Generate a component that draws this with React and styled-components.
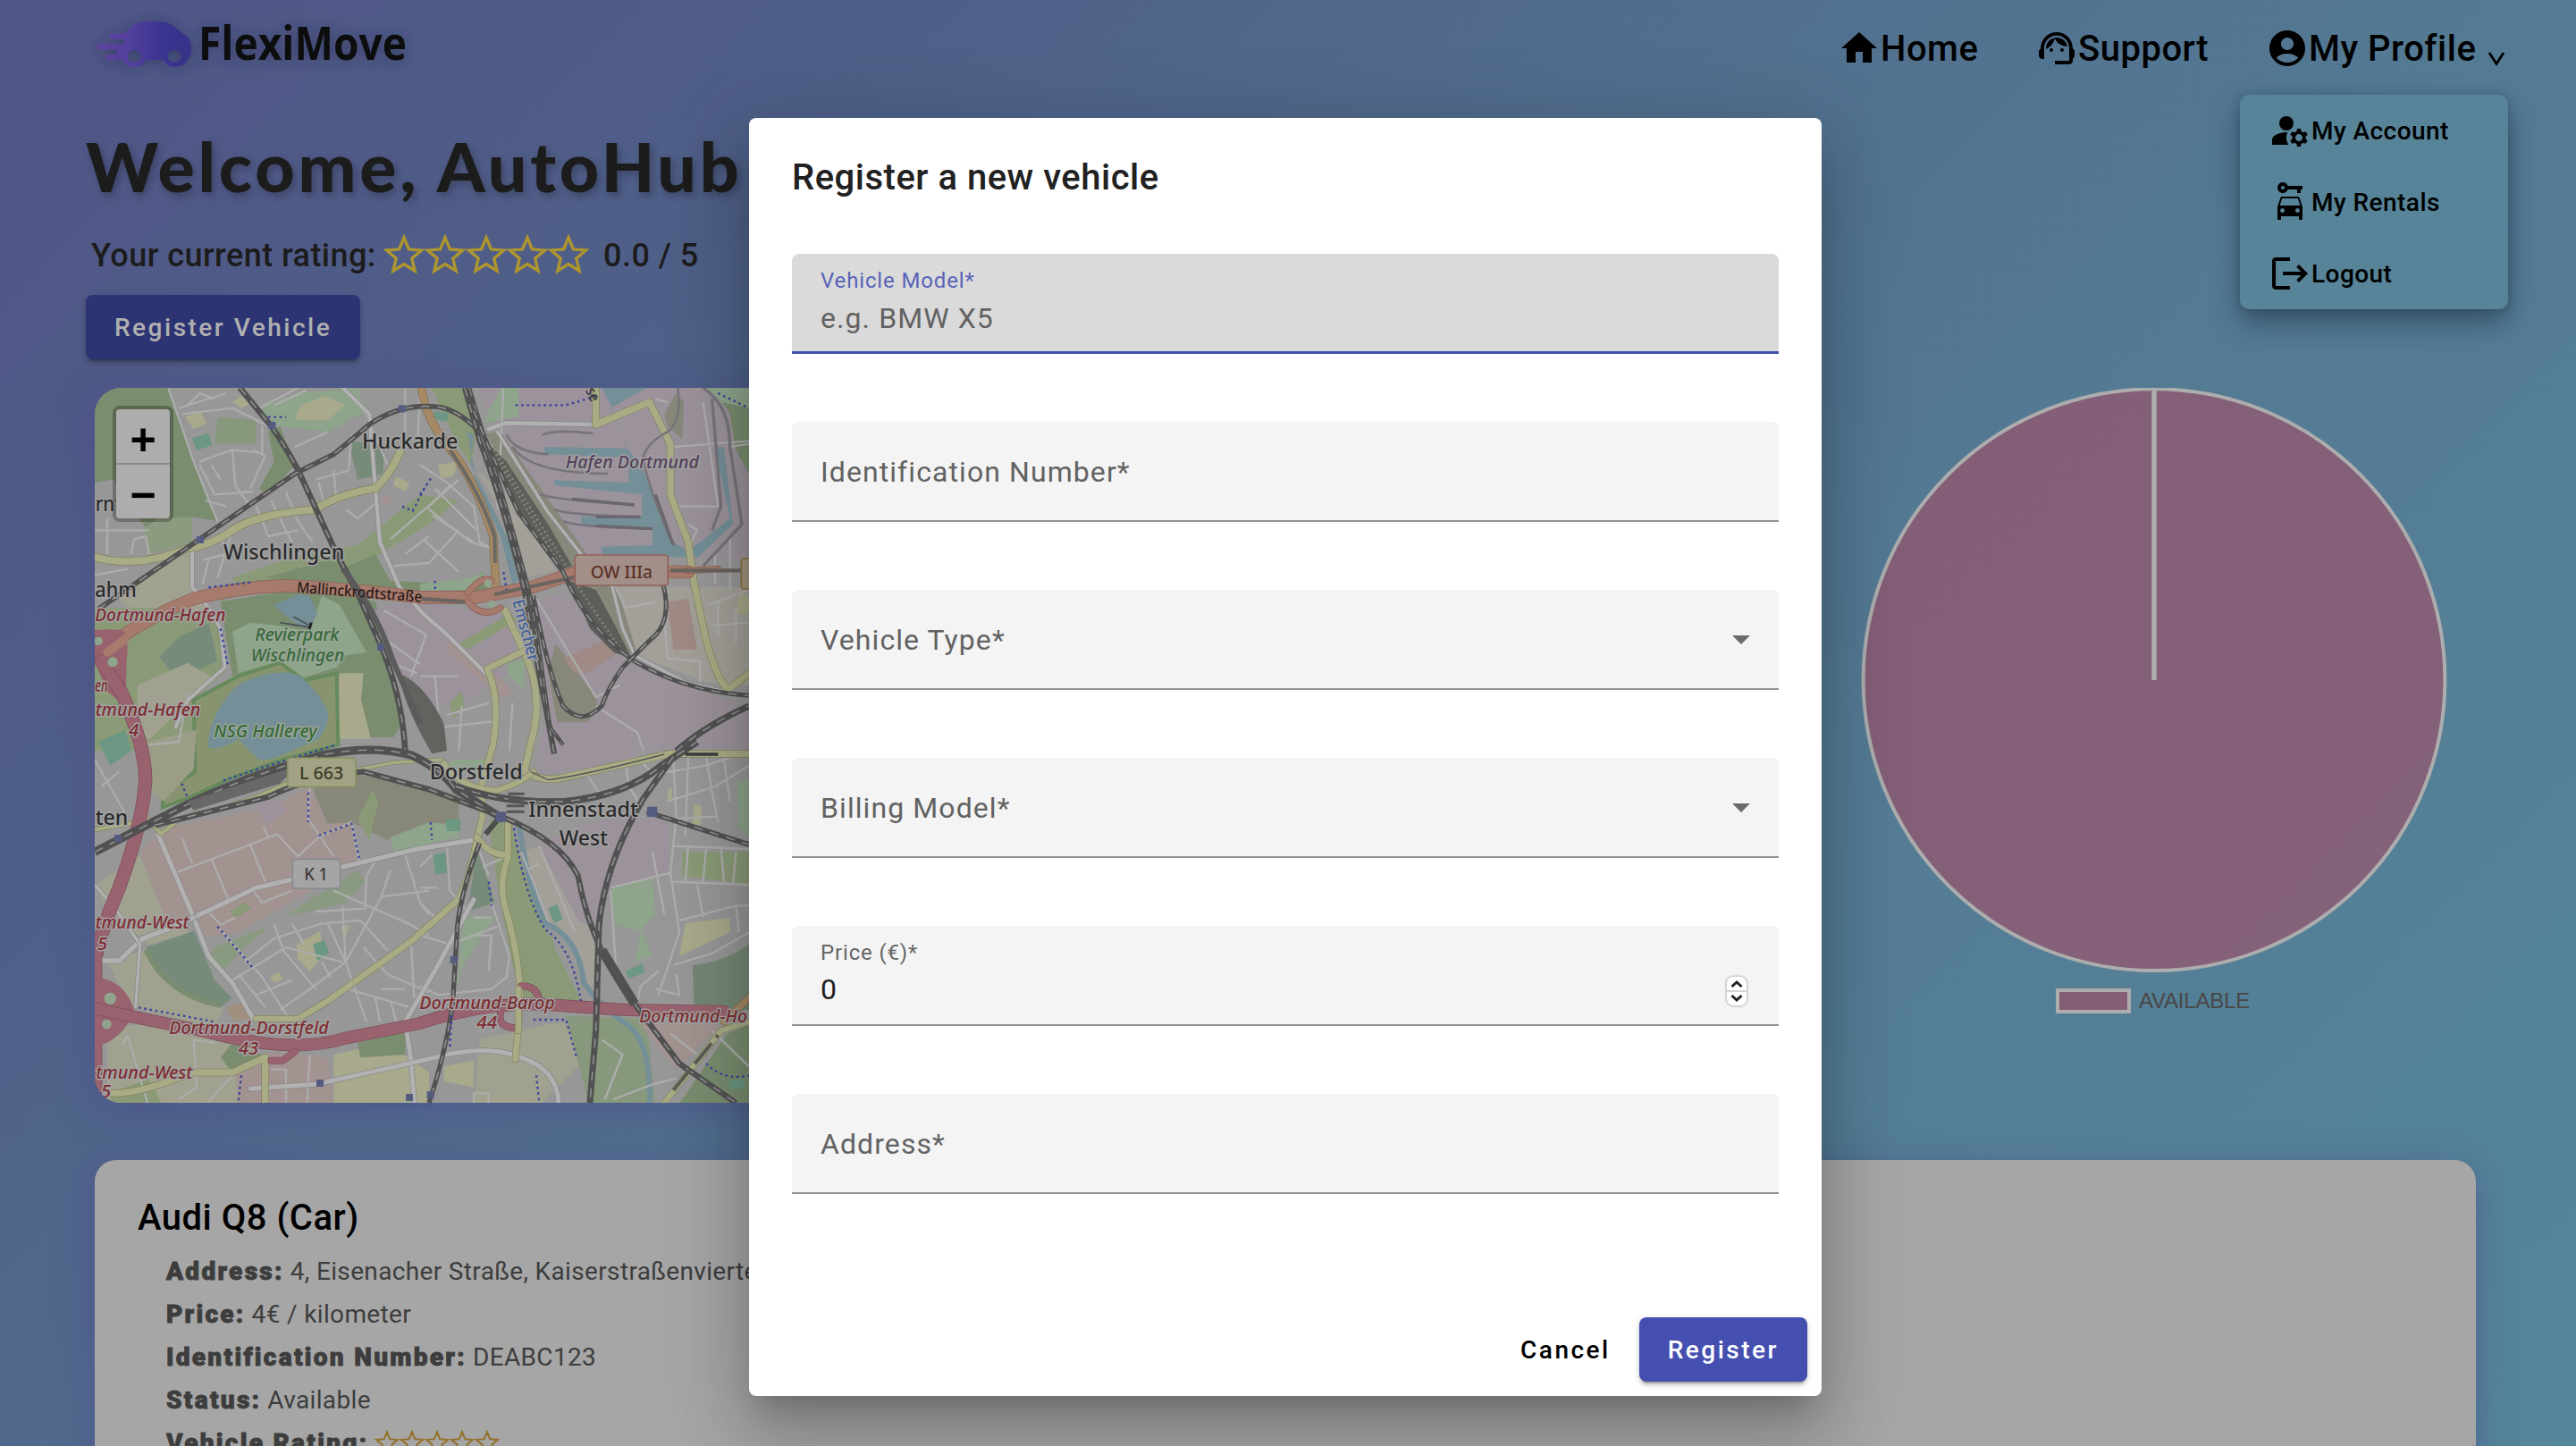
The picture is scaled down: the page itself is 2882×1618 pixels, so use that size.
import React from "react";
import styled, { createGlobalStyle } from "styled-components";
import { MdHome, MdSupportAgent, MdAccountCircle, MdManageAccounts, MdCarRental } from "react-icons/md";

const GlobalStyle = createGlobalStyle`
  * { box-sizing: border-box; }
  html, body { margin: 0; padding: 0; }
  body { font-family: Roboto, "Noto Sans", sans-serif; overflow: hidden; }
  h1, h2, h3, p, ul { margin: 0; padding: 0; }
`;

const Page = styled.div`
  position: relative;
  width: 2882px;
  height: 1618px;
  overflow: hidden;
  padding-right: 6px;
  background: linear-gradient(135deg, #505486 0%, #4f6088 23.5%, #52708f 46%, #547b94 64%, #54869a 100%);
`;

const Header = styled.header`
  display: flex;
  align-items: flex-start;
  height: 108px;
  padding: 0 70px 0 104px;
`;

const LogoSvg = styled.svg`
  display: block;
  width: 370px;
  height: 100px;
  overflow: visible;
`;

const Nav = styled.nav`
  display: flex;
  margin-left: auto;
  padding-top: 30px;
`;

const NavItem = styled.div`
  position: relative;
  display: flex;
  align-items: center;
  width: ${(p) => p.$width}px;
  height: 48px;
  font-size: 40px;
  font-weight: 500;
  line-height: 48px;
  letter-spacing: 0.5px;
  white-space: nowrap;
  color: #000;
  svg { flex: none; }
`;

const NavText = styled.span`
  padding-top: 2px;
`;

const Chevron = styled.svg`
  width: 20px;
  height: 16px;
  margin-left: auto;
  margin-right: 3px;
  margin-top: 24px;
`;

const Dropdown = styled.div`
  position: absolute;
  top: 76px;
  right: 0;
  width: 300px;
  height: 240px;
  border-radius: 10px;
  background: #578498;
  box-shadow: 0 16px 32px rgba(20, 30, 50, 0.42), 0 2px 12px rgba(20, 30, 50, 0.25);
`;

const DropdownItem = styled.div`
  display: flex;
  align-items: center;
  height: 80px;
  padding-left: 32px;
  font-size: 28px;
  letter-spacing: 0.45px;
`;

const Intro = styled.section`
  padding: 32px 0 0 96px;
`;

const Heading = styled.h1`
  font-family: Lato, "Open Sans", sans-serif;
  font-size: 77px;
  font-weight: 900;
  line-height: 90px;
  letter-spacing: 3.8px;
  color: #1c1c1c;
  white-space: nowrap;
  text-shadow: 3px 4px 8px rgba(0, 0, 0, 0.25);
`;

const RatingRow = styled.div`
  display: flex;
  align-items: center;
  height: 60px;
  margin: 26px 0 14px;
  padding-left: 6px;
  font-size: 36px;
  font-weight: 500;
  color: #1c1c1c;
  white-space: nowrap;
`;

const RatingLabel = styled.span`
  width: 327px;
  letter-spacing: 0.45px;
`;

const RatingValue = styled.span`
  margin-left: 16px;
  letter-spacing: 0.5px;
`;

const Stars = styled.svg`
  display: block;
  flex: none;
  width: ${(p) => p.$pitch * 5}px;
  height: ${(p) => p.$pitch}px;
  margin-bottom: 3px;
`;

const Button = styled.button`
  display: block;
  height: 72px;
  padding: 2px 32px 0;
  border: 0;
  border-radius: 8px;
  font: 500 28px/70px Roboto, sans-serif;
  letter-spacing: 2.5px;
  white-space: nowrap;
  color: ${(p) => (p.$dim ? "#b0b0b0" : p.$plain ? "#000" : "#fff")};
  background: ${(p) => (p.$dim ? "#2c3474" : p.$plain ? "transparent" : "#444fb0")};
  box-shadow: ${(p) =>
    p.$plain ? "none" : "0 6px 2px -4px rgba(0,0,0,.2), 0 4px 4px rgba(0,0,0,.14), 0 2px 10px rgba(0,0,0,.12)"};
`;

const Overview = styled.section`
  display: flex;
  justify-content: space-between;
  height: 800px;
  margin-top: 32px;
  padding: 0 106px;
`;

const MapPanel = styled.div`
  position: relative;
  width: 1400px;
  height: 800px;
  border-radius: 30px;
  overflow: hidden;
  background: #979797;
`;

const MapFrame = styled.div`
  border-radius: 30px;
  box-shadow: 0 8px 40px rgba(76, 70, 140, 0.5);
`;

const MapSvg = styled.svg`
  display: block;
  width: 740px;
  height: 800px;
`;

const ZoomControl = styled.div`
  position: absolute;
  left: 20px;
  top: 20px;
  width: 68px;
  border: 4px solid rgba(0, 0, 0, 0.26);
  border-radius: 8px;
  background-clip: padding-box;
`;

const ZoomButton = styled.div`
  display: flex;
  align-items: center;
  justify-content: center;
  height: ${(p) => (p.$first ? 62 : 60)}px;
  padding-top: 7px;
  border-bottom: ${(p) => (p.$first ? "2px solid #8b8b8b" : "0")};
  border-radius: ${(p) => (p.$first ? "4px 4px 0 0" : "0 0 4px 4px")};
  background: #adadad;
  color: #000;
  font: bold 50px/52px "Liberation Sans", sans-serif;
`;

const ChartPanel = styled.div`
  width: 720px;
`;

const ChartSvg = styled.svg`
  display: block;
  width: 720px;
  height: 656px;
`;

const Legend = styled.div`
  display: flex;
  align-items: center;
  justify-content: center;
  gap: 9px;
  height: 28px;
  margin-top: 16px;
  padding-right: 3px;
  font: 24px/28px "Liberation Sans", sans-serif;
  letter-spacing: -0.2px;
  color: #474747;
`;

const Swatch = styled.span`
  width: 84px;
  height: 28px;
  border: 4px solid #adadad;
  background: #845e73;
`;

const VehicleCard = styled.section`
  height: 420px;
  margin: 64px 106px 0;
  padding: 40px 48px;
  border-radius: 24px;
  background: #a6a6a6;
  box-shadow: 0 8px 40px rgba(76, 70, 140, 0.5);
`;

const VehicleTitle = styled.h2`
  font-size: 40px;
  font-weight: 500;
  line-height: 50px;
  letter-spacing: 0.5px;
  color: #000;
`;

const Detail = styled.div`
  display: flex;
  align-items: center;
  gap: 7px;
  height: 48px;
  margin-left: 32px;
  font-size: 28px;
  line-height: 48px;
  letter-spacing: 0.35px;
  color: #3d3d3d;
  white-space: nowrap;
  strong {
    font-weight: 900;
    letter-spacing: 2.3px;
    -webkit-text-stroke: 0.9px #3d3d3d;
  }
`;

const Details = styled.div`
  padding-top: 11px;
`;

const Backdrop = styled.div`
  position: absolute;
  inset: 0;
  display: flex;
  align-items: flex-start;
  justify-content: center;
  padding: 132px 6px 0 0;
`;

const Dialog = styled.div`
  width: 1200px;
  height: 1430px;
  padding-top: 35px;
  border-radius: 8px;
  background: #fff;
  box-shadow: 0 22px 30px -14px rgba(0, 0, 0, 0.2), 0 48px 76px 6px rgba(0, 0, 0, 0.14),
    0 18px 92px 16px rgba(0, 0, 0, 0.12);
`;

const DialogTitle = styled.h2`
  padding-left: 48px;
  font-size: 40px;
  font-weight: 500;
  line-height: 64px;
  letter-spacing: 0.5px;
  color: #212121;
`;

const Form = styled.div`
  display: flex;
  flex-direction: column;
  gap: 76px;
  padding: 53px 48px 138px;
`;

const Field = styled.div`
  display: flex;
  align-items: center;
  justify-content: space-between;
  height: 112px;
  padding: 0 32px;
  border-radius: 8px 8px 0 0;
  background: ${(p) => (p.$focused ? "#dadada" : "#f4f4f4")};
  box-shadow: inset 0 ${(p) => (p.$focused ? "-3px 0 #444fb0" : "-2px 0 #949494")};
`;

const FieldStack = styled.div`
  display: flex;
  flex-direction: column;
  gap: ${(p) => (p.$value ? 5 : 6)}px;
  height: 112px;
  padding-top: 16px;
`;

const FloatLabel = styled.span`
  font-size: 24px;
  line-height: 28px;
  letter-spacing: 0.85px;
  color: ${(p) => (p.$focused ? "#5963b8" : "#666")};
`;

const FieldText = styled.span`
  font-size: 32px;
  line-height: 44px;
  letter-spacing: 1.08px;
  color: ${(p) => (p.$value ? "#212121" : "#626262")};
`;

const SelectArrow = styled.svg`
  width: 20px;
  height: 10px;
`;

const Stepper = styled.svg`
  width: 24px;
  height: 36px;
  margin: 34px 3px 0 0;
  overflow: visible;
  filter: drop-shadow(0 0 1px rgba(0, 0, 0, 0.3));
`;

const Actions = styled.div`
  display: flex;
  justify-content: flex-end;
  padding-right: 16px;
`;

const starPoints = (cx) => {
  const pts = [];
  for (let i = 0; i < 10; i++) {
    const r = i % 2 ? 9.2 : 20.6;
    const a = (Math.PI / 5) * i - Math.PI / 2;
    pts.push(`${(cx + r * Math.cos(a)).toFixed(2)},${(24.4 + r * Math.sin(a)).toFixed(2)}`);
  }
  return pts.join(" ");
};

const StarRow = ({ pitch, color }) => (
  <Stars $pitch={pitch} viewBox="0 0 230 46">
    {[0, 1, 2, 3, 4].map((i) => (
      <polygon key={i} points={starPoints(23 + i * 46)} fill="none" stroke={color} strokeWidth="3.4" />
    ))}
  </Stars>
);

const Logo = () => (
  <LogoSvg viewBox="0 0 370 100">
    <defs>
      <linearGradient id="car" x1="0" x2="1">
        <stop offset="0" stopColor="#5e449f" />
        <stop offset="0.35" stopColor="#52409c" />
        <stop offset="0.7" stopColor="#3a3490" />
        <stop offset="1" stopColor="#383289" />
      </linearGradient>
      <filter id="soft" x="-20%" y="-30%" width="140%" height="170%">
        <feDropShadow dx="0" dy="2" stdDeviation="7" floodColor="#222a48" floodOpacity="0.5" />
      </filter>
    </defs>
    <g filter="url(#soft)">
      <path
        fill="url(#car)"
        fillRule="evenodd"
        d="M37 37 C44 27 51 24 60 24 H74 C86 24 92 30 100 38 C106 39 110 45 110 54 C110 61 108 66 105.500 66 C105 71 99 75 91.500 75 C85 75 81 71 79 67 H59 C57 72 52 75 45.500 75 C39 75 35 71 33 67 H17 C13 67 13 61 17 61 H25 C28 61 28 55.500 25 55.500 H8 C3.500 55.500 3.500 49 8 49 H32 C36 49 36 44 32 44 H22 C17 44 17 37.500 22 37.500 Z M46 55.500 A7.300 7.300 0 1 0 46.010 55.500 Z M91 55.500 A7.300 7.300 0 1 0 91.010 55.500 Z"
      />
      <text
        x="118"
        y="67"
        fontFamily="Open Sans, Noto Sans, sans-serif"
        fontWeight="700"
        fontSize="51.500"
        textLength="233"
        lengthAdjust="spacingAndGlyphs"
        fill="#111"
      >
        FlexiMove
      </text>
    </g>
  </LogoSvg>
);

const LogoutIcon = () => (
  <svg width="48" height="48" viewBox="0 0 24 24">
    <path d="M17 7l-1.410 1.410L18.170 11H8v2h10.170l-2.580 2.580L17 17l5-5zM4 5h8V3H4c-1.100 0-2 .9-2 2v14c0 1.100.9 2 2 2h8v-2H4V5z" />
  </svg>
);

const Area = ({ c, p }) => <polygon fill={c} points={p} />;
const Road = ({ d, w = 10, c = "#b1b1b1", casing = "#868686" }) => (
  <g fill="none" strokeLinejoin="round" strokeLinecap="round">
    <path d={d} stroke={casing} strokeWidth={w + 4} />
    <path d={d} stroke={c} strokeWidth={w} />
  </g>
);
const Rail = ({ d, w = 17 }) => (
  <g fill="none">
    <path d={d} stroke="#515151" strokeWidth={w} />
    <path d={d} stroke="#939393" strokeWidth={w > 14 ? 4.5 : 3} strokeDasharray="30 26" />
  </g>
);
const Streets = ({ d }) => <path d={d} fill="none" stroke="#acacac" strokeWidth="7" strokeLinejoin="round" />;
const Path = ({ d }) => <path d={d} fill="none" stroke="#3b449c" strokeWidth="7" strokeDasharray="8 11" />;
const Label = ({ x, y, w, size = 68, c = "#2a2a2a", italic, rot, halo = "#a3a3a3", children }) => (
  <text
    x={x}
    y={y}
    fontSize={size}
    fontWeight="500"
    textLength={w}
    lengthAdjust="spacingAndGlyphs"
    fill={c}
    fontStyle={italic ? "italic" : "normal"}
    stroke={halo}
    strokeWidth="9"
    strokeLinejoin="round"
    paintOrder="stroke"
    transform={rot ? `rotate(${rot} ${x} ${y})` : undefined}
  >
    {children}
  </text>
);

const forest = "#7a8d6f";
const meadow = "#8a9a76";
const park = "#8ea58b";
const farm = "#a0a28f";
const works = "#9c929b";
const pink = "#a29290";
const grave = "#778b7b";
const brown = "#87877a";
const water = "#748f98";
const sport = "#a9a98c";
const pitch = "#6b9783";
const red = "#7e2c30";
const yellow = { c: "#a9ab84", casing: "#7f8160" };
const motorway = { c: "#98626f", casing: "#7e4b58" };

const CityMap = () => (
  <MapSvg viewBox="0 0 740 800" fontFamily="Noto Sans, Open Sans, sans-serif">
    <g transform="translate(-6 -14) scale(0.33333)">
      {/* north-west land use */}
      <Area c={forest} p="18,42 265,42 285,110 350,290 430,490 345,475 280,480 230,560 165,480 80,350 18,360" />
      <Area c="#8c9a80" p="180,520 230,480 345,475 345,560 200,600" />
      <Area c={farm} p="220,640 340,580 345,700 400,790 300,810 180,820 90,740" />
      <Area c={meadow} p="480,680 650,620 900,570 1110,400 1240,420 1140,500 940,620 960,700 860,690 490,700" />
      <Area c={forest} p="590,680 800,620 870,640 960,600 1010,690 1260,700 1320,660 1340,720 1140,730 860,700" />
      <Area c={park} p="560,110 700,60 900,42 930,120 800,190 640,170" />
      <Area c="#87987c" p="430,140 560,150 560,230 420,230" />
      <Area c={sport} p="710,100 790,70 860,100 800,150 690,150" />
      <Area c={sport} p="320,140 370,120 395,160 350,180" />
      <Area c={sport} p="480,90 510,70 540,95 510,110" />
      <Area c={pitch} p="345,210 400,195 412,235 360,252" />
      <Area c={grave} p="870,220 990,235 985,330 900,350" />
      <Area c={forest} p="600,190 640,170 690,300 600,400 570,380 620,290" />
      <Area c={sport} p="1030,340 1075,360 1060,390 1020,370" />
      <Area c={pink} p="990,395 1020,415 1000,435 975,420" />
      <Area c={meadow} p="18,780 200,780 400,800 440,860 460,990 360,1080 340,1260 18,1260" />
      <Area c={forest} p="440,760 560,740 750,710 960,760 1000,900 1060,1150 1020,1215 940,1215 830,1000 720,1030 480,1010" />
      <Area c={park} p="480,860 540,830 640,840 740,860 780,740 840,770 930,930 860,940 830,980 720,1015 640,960 500,1000" />
      <Area c={water} p="620,770 700,735 740,740 765,800 735,850 690,830 650,800" />
      <Area c={grave} p="235,945 300,880 400,830 430,960 360,990 280,1005" />
      <Area c={farm} p="160,1040 330,965 425,1020 340,1090 200,1225 165,1200" />
      <polygon fill="#87946f" stroke="#668a5c" strokeWidth="12" points="350,1090 500,1010 640,965 720,1025 830,1000 835,1240 650,1290 480,1350 330,1420 245,1450 250,1400 355,1330" />
      <path fill={water} d="M400,1230 Q410,1120 500,1040 Q610,980 700,1005 Q760,1050 790,1110 Q820,1150 770,1220 L700,1250 Q600,1300 570,1290 L500,1220 Q440,1260 400,1250 Z" />
      <Area c={sport} p="838,1000 920,1000 912,1090 945,1220 840,1220" />
      <Area c={pitch} p="30,1230 120,1190 140,1260 70,1310" />
      {/* harbour and works */}
      <Area c={works} p="950,790 1120,750 1300,800 1400,1000 1240,1120 1060,1080 1000,900" />
      <g transform="translate(1110 0)">
        <Area c={works} p="190,42 1104,42 1104,620 520,600 270,190" />
        <Area c={park} p="270,42 330,42 330,140 210,160" />
        <Area c={meadow} p="40,42 140,42 190,200 170,300 120,220" />
        <Area c={forest} p="980,42 1104,42 1104,330 1060,250 1040,130" />
        <Area c={park} p="960,42 1104,42 1104,110 1010,90" />
        <Area c={brown} p="820,130 860,60 885,90 880,215 830,170" />
        <Area c="#a3a099" p="190,320 290,400 460,655 350,680 250,420" />
        <Area c={brown} p="220,195 270,190 560,600 660,710 730,940 700,950 590,850 480,650 300,330" />
        <Area c={water} p="610,42 690,42 760,42 640,110 690,240 740,300 850,560 900,590 1040,480 990,240 1020,240 1050,500 930,612 610,600 610,575 780,570 780,510 540,500 540,475 745,475 745,400 450,370 450,352 700,360 700,275 420,265 415,240 690,245 640,100" />
        <Area c={water} p="160,190 180,200 170,300 220,400 300,560 330,690 310,700 270,540 190,370" />
        <Area c={sport} p="60,300 130,290 110,340 70,345" />
        <Area c={pitch} p="50,120 95,125 90,155 45,145" />
        <Area c={park} p="0,700 160,680 220,660 160,720 0,725" />
        <Area c={works} p="30,780 270,790 340,930 220,980 60,880" />
        <Area c={meadow} p="130,900 300,800 330,820 160,920" />
        <Area c={pink} p="90,890 230,985 310,1060 280,1085 90,930" />
        <Area c={works} p="390,755 490,730 640,900 1000,1080 1104,1110 1104,1260 400,1260 430,1100" />
        <Area c="#a3a099" p="660,710 1104,710 1104,1040 960,1030 730,940" />
        <Area c={brown} p="455,900 590,1080 600,1120 560,1165 460,1165 430,1000" />
        <Area c="#a08a85" p="480,950 640,880 680,920 560,1000 520,1000" />
        <Area c="#a08a85" p="830,760 900,750 930,920 850,920" />
        <Area c={sport} p="1070,730 1104,740 1104,800 1060,800" />
        <Area c={park} p="290,970 350,950 350,1050 300,1010" />
        <Area c={meadow} p="100,1100 140,1060 150,1120 110,1150" />
      </g>
      {/* south-west */}
      <g transform="translate(0 1230)">
        <Area c="#9c9d87" p="190,0 360,-40 350,90 250,200 210,170" />
        <Area c={pink} p="170,370 250,290 600,220 740,150 800,280 870,220 900,400 850,440 500,640 380,660 350,600 250,585" />
        <Area c={works} p="550,210 630,190 660,230 600,280" />
        <Area c={brown} p="750,160 900,110 1140,150 1240,180 1240,260 1140,290 1000,330 880,270 800,275" />
        <Area c={park} p="1010,320 1140,270 1240,280 1240,320 1020,370" />
        <Area c={farm} p="18,480 170,380 250,580 340,640 200,680 60,560" />
        <Area c={farm} p="60,740 190,700 300,830 450,890 420,960 140,890" />
        <path fill={grave} d="M190,690 L350,635 Q390,720 420,800 L480,860 L440,890 Q260,850 190,690 Z" />
        <path fill="none" stroke={forest} strokeWidth="18" d="M190,700 Q260,850 440,885" />
        <Area c="#8a9a80" p="420,690 600,620 900,430 925,470 860,540 640,590 500,710 440,780 400,740" />
        <Area c={meadow} p="470,570 520,540 545,560 490,590" />
        <Area c="#a09080" p="460,890 510,875 545,930 480,940" />
        <Area c={farm} p="60,960 260,940 560,1010 600,1230 60,1230" />
        <Area c={forest} p="440,1060 480,1010 600,1060 480,1110" />
        <Area c={meadow} p="70,1180 200,1130 250,1230 70,1230" />
        <Area c={pink} p="490,1110 600,1040 800,1060 820,1230 500,1230" />
        <Area c={sport} p="820,1050 1000,1010 1140,1110 1140,1230 820,1230" />
        <Area c={forest} p="900,1010 1060,970 1060,1050 910,1060" />
        <Area c={sport} p="695,680 775,635 785,720 740,770 700,730" />
        <Area c={pitch} p="750,680 790,665 805,710 765,735" />
        <Area c={sport} p="605,790 635,775 650,795 620,810" />
        <Area c={sport} p="845,620 875,615 860,650 850,645" />
        <Area c={meadow} p="900,260 950,160 970,200 940,330" />
      </g>
      {/* south-east */}
      <g transform="translate(1110 1230)">
        <Area c={works} p="390,60 410,-10 700,-10 730,60 400,115" />
        <Area c={park} p="60,90 120,60 230,60 180,110" />
        <path fill={meadow} d="M230,260 L310,280 Q360,500 420,630 L540,870 L340,880 L300,700 L260,480 Z" />
        <Area c={grave} p="190,360 230,470 250,540 160,570" />
        <Area c={park} p="150,580 250,590 140,760 120,840" />
        <Area c={pitch} p="45,380 85,370 90,440 50,445" />
        <Area c={pitch} p="85,260 135,260 135,300 90,300" />
        <Area c={works} p="400,340 640,250 830,260 830,440 640,490 600,620 530,600 430,450" />
        <Area c="#a3a099" p="340,370 400,350 530,600 600,640 595,850 550,830 500,660 420,600" />
        <Area c={pitch} p="430,560 460,545 480,595 450,610" />
        <Area c={meadow} p="370,660 440,650 470,750 400,790" />
        <Area c={park} p="640,490 780,460 790,580 740,630 780,720 720,740 740,640 650,610" />
        <Area c={pitch} p="690,770 745,745 755,775 700,795" />
        <path fill="#748775" d="M915,750 Q1020,740 1104,680 V900 H920 Z" />
        <Area c={sport} p="890,610 1040,590 1040,640 870,720" />
        <Area c={park} p="1065,140 1104,120 1104,320 1070,290" />
        <Area c={meadow} p="880,370 1104,370 1104,480 880,450" />
        <Area c={sport} p="920,210 945,215 940,280 915,280" />
        <Area c={sport} p="830,160 845,155 845,200 832,200" />
        <Area c={farm} p="200,1000 370,960 480,940 560,1060 390,1230 180,1230" />
        <Area c={sport} p="80,1090 180,1070 180,1160 80,1140" />
        <Area c="#87987c" p="490,920 760,930 790,1230 570,1230" />
        <Area c={pink} p="740,950 1010,950 860,1100" />
        <Area c={forest} p="1030,980 1104,950 1104,1230 860,1230" />
        <Area c={pitch} p="1035,1140 1085,1130 1090,1165 1040,1165" />
        <path d="M330,270 Q360,480 420,610 Q530,650 550,810 Q600,880 680,940 Q780,990 770,1230" fill="none" stroke={water} strokeWidth="18" />
      </g>

      {/* minor streets */}
      <Streets d="M265,42 L350,290 L430,490 M300,110 L460,60 M310,130 L480,110 L600,170 M330,100 L370,60 L420,80 M370,290 L480,250 L580,260 M370,300 L420,400 L550,390 M480,250 L490,370 L540,440 M410,300 L440,350 M540,380 L590,270 L550,250 M580,260 L580,170 M390,420 L460,440 M730,50 L620,100 M800,190 L690,240 M570,110 L700,42 M850,42 L930,130 L1000,300 M760,350 L870,320 L880,200 M770,360 L790,440 M820,320 L830,430 M560,440 L600,540 L700,520 M610,420 L680,560 M660,390 L700,490 L750,560 M380,620 L460,600 L440,540 M380,700 L400,620 M480,520 L430,680 M18,520 L200,520 M60,480 L60,600 M140,600 L150,550 L190,540 L200,600 M18,670 L130,650 M860,450 L900,480 L960,430 M1020,640 L1140,630 L1240,520 M1010,550 L1240,350 M1060,600 L1140,540 M1110,60 L1100,250 M1060,42 L1060,250 M1160,380 L1300,520 M1140,450 L1280,560 L1350,580 M1120,550 L1240,660 M990,790 L1130,870 L1080,1010 M970,870 L1110,970 M1000,960 L1100,1000 M1160,1010 L1180,1240 M1110,1010 L1240,1010 M330,1070 L300,1230 L200,1240 M1200,1140 L1340,1100 M1190,1180 L1370,1160 M1250,1110 L1240,1260 M1420,1100 L1410,1260" />
      <Streets d="M1110,300 L1200,360 L1290,440 L1310,560 L1350,580 M1130,450 L1210,370 M1150,470 L1290,560 M1370,450 L1390,42 M1900,80 L1940,90 M1960,240 L2214,220 M1980,440 L2110,440 M2060,90 L2110,440 M2150,240 L2214,230 M2010,500 L2040,520 L2020,560 M2100,590 L2100,700 M2150,540 L2150,720 M2080,770 L2214,720 M2090,840 L2214,830 M2110,760 L2110,880 M2170,780 L2170,900 M1760,700 L1800,780 L1900,760 M1930,830 L1940,950 L2050,960 L2050,1030 M1500,750 L1700,1080 L1780,1040 M1700,1110 L1840,1200 L1860,1260" />
      <g transform="translate(0 1230)">
        <Streets d="M18,60 L120,240 M40,150 L100,100 M290,440 L630,310 L700,385 L770,320 L880,270 L905,400 M410,395 L465,525 M540,345 L590,470 M310,320 L345,410 M585,285 L600,320 M740,150 L735,260 L820,385 M550,500 L580,540 L680,500 M400,570 L440,615 L490,590 M820,500 L1070,610 L1140,650 M960,400 L930,450 L925,560 L760,570 M1060,380 L1110,540 L1140,580 M1010,430 L980,520 L860,740 M980,520 L1140,500 M520,740 L620,660 L780,610 L910,600 L1000,700 M620,610 L650,700 L760,830 M680,610 L720,680 M480,800 L660,690 L850,740 M430,620 L580,790 L670,930 M500,780 L590,890 M640,900 L740,830 L860,740 L850,550 M560,850 L680,800 M800,610 L860,740 L930,940 M870,830 L1070,890 M920,690 L1000,780 L1140,840 M1080,680 L1090,860 M980,830 L1060,830 M960,860 L975,940 M1010,870 L1030,940 M780,740 L810,790 M350,1000 L360,1160 L300,1200 M130,990 L200,1230 M110,1020 L130,985 M740,1050 L730,1230 M610,1100 L660,1100 L660,1230 M380,1230 L480,1120 M350,1000 L420,1010" />
      </g>
      <g transform="translate(1110 1230)">
        <Streets d="M0,360 L200,320 M90,340 L100,500 L160,570 M0,420 L40,380 M0,490 L60,490 M0,540 L50,590 M200,370 L230,450 M0,650 L100,680 L260,620 M210,420 L280,390 M240,540 L300,720 L290,790 L240,830 L60,850 L0,820 M180,590 L240,590 M170,650 L240,650 L230,770 M340,370 L430,600 M400,350 L520,640 M360,430 L400,410 M560,110 L600,170 M690,60 L700,150 L740,210 M740,60 L780,110 L960,80 L1104,30 M850,60 L860,250 L840,440 L870,640 L800,850 M900,50 L890,320 M960,50 L980,170 L1000,270 M1020,60 L1040,200 M830,200 L990,150 L1104,80 M840,260 L1000,250 M640,490 L840,440 M780,370 L820,580 M850,350 L1104,360 M850,470 L1104,480 M900,350 L890,470 M960,360 L950,470 M1010,360 L1020,470 M1060,370 L1050,480 M870,600 L1060,550 L1104,550 M930,480 L950,590 M1060,550 L1070,640 M850,750 L980,710 L1104,640 M640,500 L660,800 L730,870 L740,820 L800,770 M790,830 L870,850 L860,780 M610,1000 L680,1050 L620,1200 M840,980 L930,1050 M650,1200 L780,1150 L860,1130 M980,970 L1104,1090 M180,1230 L180,1180 L230,1180 L230,1230" />
      </g>

      {/* main roads */}
      <Road w={13} d="M850,42 L940,130 L960,380 L975,560 L1040,710 L1120,800 L1200,870 L1330,1000" />
      <Road w={12} d="M345,580 L345,710 L400,780 L440,850 L455,980 L330,1090 L290,1180" />
      <Road w={14} d="M1340,180 L1400,160 L1700,165" />
      <Road w={10} d="M1370,190 L1540,460 L1650,600 L1750,690 L1790,850 L1830,940 L2000,1030 L2214,1080" />
      <Road w={15} d="M230,1540 L350,1820 L400,1950 L480,2040 L550,2160" />
      <Road w={16} d="M350,1820 L560,1720 L690,1690 L850,1650 L1100,1590 L1290,1560" />
      <Road w={16} d="M18,1965 L100,1965 L180,1890 L260,1860 L350,1820" />
      <Road w={10} d="M18,1710 L80,1780 L170,1910 L155,2120" />
      <Road w={15} d="M1290,1760 L1170,1980 L1060,2170 L1080,2300 L1090,2440" />
      <Road w={15} d="M540,2395 L760,2380 L1140,2295 Q1330,2240 1450,2290 Q1570,2330 1575,2442" />
      <Road {...yellow} w={24} d="M18,610 Q170,650 330,580 Q400,575 480,520 T760,450 Q830,400 960,380 Q1020,320 1045,250" />
      <Road {...yellow} w={22} d="M1700,42 V165 L1880,90 L1950,230 V400 L2010,560 L2030,700 L2070,890 Q2120,1060 2150,1050 L2214,1000" />
      <Road {...yellow} w={22} d="M1395,790 L1460,930 Q1530,1080 1480,1240 L1460,1330 Q1510,1360 1570,1355 L1950,1270 H2214" />
      <Road {...yellow} w={20} d="M1460,925 L1335,985 Q1380,1080 1355,1240 L1315,1380 L1320,1480 L1300,1560 Q1260,1760 1215,1780 L1080,1900 L800,2100 L700,2160 H560" />
      <Road {...yellow} w={20} d="M1300,1550 Q1340,1610 1400,1610 M1405,1500 V1620 Q1370,1710 1400,1800 Q1450,1980 1445,2120 L1430,2295" />
      <Road {...yellow} w={18} d="M1190,1300 Q1230,1380 1360,1395 Q1450,1370 1490,1330" />
      <Road {...yellow} w={10} d="M340,1475 Q520,1440 660,1370 L1020,1300 L1180,1290" />
      <Road {...yellow} w={22} d="M80,2410 Q180,2410 340,2340 H480 L590,2290 V2442" />
      <Road {...yellow} w={18} d="M1930,2442 L2120,2200 L2214,2170" />
      <Road {...yellow} w={12} d="M18,1525 L160,1500 L200,1490 L240,1540 L290,1500" />
      <Road c="#a68a65" casing="#7d6a4c" w={24} d="M1115,42 Q1130,160 1230,270 Q1310,390 1355,540 L1365,720" />
      <path d="M1210,250 Q1310,390 1360,540 L1362,630" fill="none" stroke="#6b6963" strokeWidth="12" />

      {/* motorways */}
      <Road c="#a67a6c" casing="#8a5c50" w={40} d="M30,940 Q150,830 350,750 Q550,700 700,708 Q900,720 1110,745 H1300 L1490,710 L1640,660 H2010" />
      <Road c="#a67a6c" casing="#8a5c50" w={18} d="M1270,730 Q1320,670 1350,690 M1270,760 Q1320,820 1380,780 M2010,655 L2110,650" />
      <path d="M1115,750 L1260,760 M1360,735 L1640,675 M1950,655 H2214" fill="none" stroke="#6b6460" strokeWidth="13" />
      <circle cx="1338" cy="698" r="13" fill={park} />
      <circle cx="1350" cy="768" r="13" fill={park} />
      <path fill="#98626f" d="M18,855 Q70,850 110,855 Q135,870 125,960 Q120,1060 130,1120 L60,1060 L18,960 Z" />
      <Road {...motorway} w={42} d="M40,960 L110,1070 Q190,1250 188,1360 Q180,1500 100,1720 Q40,1860 25,1940" />
      <Road {...motorway} w={42} d="M20,1940 V2430" />
      <path fill="#98626f" d="M18,2020 Q120,2030 150,2130 Q130,2200 60,2240 L18,2250 Z" />
      <Road {...motorway} w={38} d="M18,2125 L130,2150 L400,2205 Q680,2280 860,2225 L1110,2175 Q1300,2110 1500,2110 L1800,2130 L2130,2135" />
      <Road {...motorway} w={20} d="M610,2300 H650 L690,2270 M1450,2050 Q1510,2050 1510,2110 M1380,2140 Q1370,2190 1430,2190" />
      <circle cx="70" cy="2092" r="20" fill={park} />
      <circle cx="58" cy="2178" r="16" fill={park} />
      <circle cx="78" cy="962" r="17" fill={park} />
      <circle cx="30" cy="892" r="14" fill={park} />
      <Road c="#a68a65" casing="#7d6a4c" w={22} d="M2130,2170 L2214,2090" />
      <Road {...yellow} w={20} d="M1440,2060 V2200" />
      <Road c="#a67a6c" casing="#a67a6c" w={26} d="M60,930 L120,885" />

      {/* railways */}
      <path d="M1340,230 L1400,290 L1540,500 L1620,640 L1590,650 L1420,430 Z M1610,690 L1700,720 L1770,850 L1820,950 L1760,930 L1680,850 Z" fill="#5d5d59" />
      <path d="M1345,240 L1580,640 M1360,250 L1600,640 M1640,710 L1790,930" stroke="#87877a" strokeWidth="8" strokeDasharray="6 10" />
      <path d="M1040,1000 Q1130,1040 1190,1170 L1200,1260 L1150,1270 Q1050,1100 1040,1000 Z" fill="#62625f" />
      <Rail w={20} d="M505,42 L610,170 Q680,270 720,360 L830,600 L900,730 L980,910 Q1050,1080 1060,1260" />
      <path d="M850,650 Q960,780 1020,960 L1110,1170" fill="none" stroke="#5b5b5b" strokeWidth="18" />
      <Rail w={17} d="M30,785 L370,550 L690,330 L820,265 L940,165 Q1040,95 1160,105 Q1230,110 1300,180" />
      <Rail w={19} d="M1260,42 L1310,220 Q1380,400 1460,720 Q1490,900 1540,1160 L1560,1270" />
      <Rail w={13} d="M1275,42 L1330,220 Q1390,400 1475,720 Q1510,900 1545,1180 L1590,1240" />
      <Rail w={15} d="M1290,120 L1340,240 L1440,460 L1590,660 Q1670,850 1830,960 Q2000,1060 2214,1075" />
      <Rail w={15} d="M1925,700 Q1960,830 1880,890 L1790,980 Q1740,1050 1720,1110 Q1650,1180 1590,1110 Q1540,1000 1490,740" />
      <path d="M1400,200 Q1430,260 1540,265 M1420,240 Q1480,330 1740,330 M1510,400 Q1580,420 1830,435 M1560,450 Q1610,470 1850,475 M1590,490 Q1640,510 1890,515 M1520,200 Q1560,180 1690,195 M1960,570 Q1860,340 1860,270 Q1880,220 1940,190 Q1990,150 1975,42" fill="none" stroke="#77757a" strokeWidth="8" />
      <path d="M1960,570 L1900,400 M1620,415 L1830,435 M1700,475 L1850,475 M1700,505 L1890,515" fill="none" stroke="#6a686c" strokeWidth="10" />
      <path d="M2060,42 Q2150,100 2150,240 L2190,500 L2060,640 M2090,80 L2120,440 L2090,520" fill="none" stroke="#77757a" strokeWidth="10" />
      <Rail w={22} d="M1970,1262 Q2060,1180 2214,1110" />
      <Rail w={28} d="M18,1600 L250,1480 Q500,1350 780,1275 Q950,1240 1080,1275 Q1180,1320 1230,1390 L1390,1490" />
      <Rail w={19} d="M220,1510 L600,1415 Q760,1340 920,1330 L1140,1390 L1380,1480 Q1580,1560 1640,1680 Q1680,1900 1800,2070 L1980,2310 L2170,2442" />
      <path d="M330,1430 L700,1310 L640,1370 L350,1460 Z" fill="#686868" />
      <Rail w={24} d="M1230,1380 Q1400,1440 1600,1430 Q1800,1410 1920,1310 L2040,1230" />
      <path d="M1405,1405 H1460 M1405,1425 H1460 M1400,1445 H1460 M1400,1465 H1460" stroke="#555" strokeWidth="9" />
      <Rail w={17} d="M1870,1465 L2214,1575" />
      <Rail w={21} d="M1960,1280 L1860,1420 Q1730,1640 1710,1850 L1700,2200 L1680,2442" />
      <path d="M1720,1930 L1830,2110" stroke="#515151" strokeWidth="32" />
      <Rail w={16} d="M1310,1570 Q1250,1720 1235,1850 L1220,2100 Q1200,2260 1140,2442" />
      <path d="M1380,1480 L1330,1540" stroke="#4d4d4d" strokeWidth="18" />
      <path d="M2000,1272 H2110" stroke="#3c3c3c" strokeWidth="11" />
      <path d="M1960,2400 L2110,2215" stroke="#5c5b55" strokeWidth="12" strokeDasharray="90 24" />
      <path d="M1480,1330 L1540,1358 Q1650,1345 1930,1272" fill="none" stroke="#555" strokeWidth="4" />

      {/* footpaths and stations */}
      <Path d="M440,850 L465,975 M400,712 L540,695 M600,140 L660,140 M1050,440 L1085,455 L1130,370 M450,1360 L600,1310 L830,1240 M310,1370 L330,1420" />
      <Path d="M735,1400 L735,1500 M770,1545 L880,1505 L905,1620 M430,1850 L550,1990 M165,2122 L420,2170 M510,2350 L500,2440" />
      <Path d="M1425,1520 Q1460,1750 1530,1860 Q1620,1920 1650,2100 M1490,2163 H1600 L1635,2290 M1340,1700 L1350,1780 M1145,1500 L1150,1560 M1215,2150 L1210,2260 M1500,2350 L1510,2442 M1430,100 L1600,100 L1700,70 M2110,60 L2214,110 M1390,660 L1400,720 M1110,400 L1150,340 M1160,690 L1160,720 M2070,2310 Q2130,2370 2214,2350" />
      {[[613, 168], [1050, 112], [372, 552], [978, 912], [1381, 1482], [1889, 1465], [96, 1554], [1223, 1962], [774, 2376], [1074, 2424], [1145, 2415]].map(
        ([x, y]) => {
          const size = x > 1300 ? 34 : 24;
          return <rect key={x} x={x - size / 2} y={y - size / 2} width={size} height={size} fill="#555c80" />;
        }
      )}
      <path d="M640,830 L735,845 M685,810 L735,838" stroke="#4a5058" strokeWidth="5" />
      <path d="M745,830 L738,852" stroke="#222" strokeWidth="9" />

      {/* place names */}
      <Label x="20" y="455" w="88" size="73">rnt</Label>
      <Label x="915" y="247" w="322" size="73">Huckarde</Label>
      <Label x="450" y="618" w="406" size="73">Wischlingen</Label>
      <Label x="19" y="743" w="139" size="73">ahm</Label>
      <Label x="20" y="1510" w="110" size="73">ten</Label>
      <Label x="1142" y="1355" w="312" size="73">Dorstfeld</Label>
      <Label x="1474" y="1482" w="368" size="73">Innenstadt</Label>
      <Label x="1577" y="1577" w="163" size="73">West</Label>
      <Label x="695" y="728" w="422" size="50" c="#2a1a1a" halo="none" rot="4.500">Mallinckrodtstraße</Label>
      <Label x="19" y="826" w="438" size="60" c={red} italic>Dortmund-Hafen</Label>
      <Label x="19" y="1063" w="43" size="60" c={red} italic>en</Label>
      <Label x="20" y="1143" w="353" size="60" c={red} italic>tmund-Hafen</Label>
      <Label x="132" y="1213" w="34" size="60" c={red} italic>4</Label>
      <Label x="556" y="890" w="282" size="60" c="#37693a" halo="#98a596" italic>Revierpark</Label>
      <Label x="542" y="960" w="314" size="60" c="#37693a" halo="#98a596" italic>Wischlingen</Label>
      <Label x="418" y="1214" w="346" size="60" c="#37693a" halo="#98a596" italic>NSG Hallerey</Label>
      <Label x="1598" y="312" w="448" size="60" c="#54405a" italic>Hafen Dortmund</Label>
      <Label x="1420" y="758" w="212" size="54" c="#3f5f97" rot="75">Emscher</Label>
      <Label x="1665" y="50" w="46" size="50" c="#333" halo="none" rot="65">se</Label>
      <Label x="20" y="1857" w="314" size="60" c={red} italic>tmund-West</Label>
      <Label x="26" y="1929" w="34" size="60" c={red} italic>5</Label>
      <Label x="268" y="2210" w="535" size="60" c={red} italic>Dortmund-Dorstfeld</Label>
      <Label x="500" y="2280" w="68" size="60" c={red} italic>43</Label>
      <Label x="22" y="2361" w="324" size="60" c={red} italic>tmund-West</Label>
      <Label x="38" y="2424" w="34" size="60" c={red} italic>5</Label>
      <Label x="1108" y="2126" w="454" size="60" c={red} italic>Dortmund-Barop</Label>
      <Label x="1300" y="2194" w="68" size="60" c={red} italic>44</Label>
      <Label x="1846" y="2172" w="362" size="60" c={red} italic>Dortmund-Ho</Label>
      <rect x="1630" y="603" width="312" height="102" rx="10" fill="#a28f87" stroke="#93605a" strokeWidth="5" />
      <Label x="1682" y="680" w="208" size="60" c="#5d3128" halo="none">OW IIIa</Label>
      <rect x="2188" y="615" width="80" height="102" rx="10" fill="#a2967f" stroke="#8a6f45" strokeWidth="5" />
      <rect x="665" y="1284" width="229" height="97" rx="10" fill="#a2a385" stroke="#8a8f62" strokeWidth="5" />
      <Label x="705" y="1355" w="148" size="60" c="#3c3d28" halo="none">L 663</Label>
      <rect x="682" y="1624" width="160" height="98" rx="12" fill="#a5a5a5" stroke="#868b8f" strokeWidth="5" />
      <Label x="721" y="1694" w="80" size="60" c="#3c3c3c" halo="none">K 1</Label>
    </g>
  </MapSvg>
);

const selectArrow = (
  <SelectArrow viewBox="0 0 20 10">
    <path d="M0 0H20L10 10Z" fill="#6b6b6b" />
  </SelectArrow>
);

const fields = [
  { label: "Vehicle Model*", text: "e.g. BMW X5", focused: true },
  { label: "Identification Number*" },
  { label: "Vehicle Type*", select: true },
  { label: "Billing Model*", select: true },
  { label: "Price (€)*", text: "0", value: true },
  { label: "Address*" },
];

const details = [
  ["Address:", "4, Eisenacher Straße, Kaiserstraßenviertel, Dortmund"],
  ["Price:", "4€ / kilometer"],
  ["Identification Number:", "DEABC123"],
  ["Status:", "Available"],
];

export default function App() {
  return (
    <Page>
      <GlobalStyle />
      <Header>
        <Logo />
        <Nav>
          <NavItem $width={221}>
            <MdHome size={48} />
            <NavText>Home</NavText>
          </NavItem>
          <NavItem $width={258}>
            <MdSupportAgent size={48} />
            <NavText>Support</NavText>
          </NavItem>
          <NavItem $width={271}>
            <MdAccountCircle size={48} />
            <NavText>My Profile</NavText>
            <Chevron viewBox="0 0 20 16">
              <path d="M2 1 L10 13.500 L18 1" fill="none" stroke="#000" strokeWidth="2.800" />
            </Chevron>
            <Dropdown>
              <DropdownItem>
                <MdManageAccounts size={48} />
                <NavText>My Account</NavText>
              </DropdownItem>
              <DropdownItem>
                <MdCarRental size={48} />
                <NavText>My Rentals</NavText>
              </DropdownItem>
              <DropdownItem>
                <LogoutIcon />
                <NavText>Logout</NavText>
              </DropdownItem>
            </Dropdown>
          </NavItem>
        </Nav>
      </Header>

      <Intro>
        <Heading>Welcome, AutoHub</Heading>
        <RatingRow>
          <RatingLabel>Your current rating:</RatingLabel>
          <StarRow pitch={46} color="#ad952f" />
          <RatingValue>0.0 / 5</RatingValue>
        </RatingRow>
        <Button $dim>Register Vehicle</Button>
      </Intro>

      <Overview>
        <MapFrame>
          <MapPanel>
            <CityMap />
            <ZoomControl>
              <ZoomButton $first>+</ZoomButton>
              <ZoomButton>−</ZoomButton>
            </ZoomControl>
          </MapPanel>
        </MapFrame>
        <ChartPanel>
          <ChartSvg viewBox="0 0 720 656">
            <circle cx="360" cy="326.700" r="325.400" fill="rgba(180,68,92,0.5)" stroke="#adadad" strokeWidth="4" />
            <path d="M360 2V327" stroke="#adadad" strokeWidth="5.500" />
          </ChartSvg>
          <Legend>
            <Swatch />
            AVAILABLE
          </Legend>
        </ChartPanel>
      </Overview>

      <VehicleCard>
        <VehicleTitle>Audi Q8 (Car)</VehicleTitle>
        <Details>
          {details.map(([name, value]) => (
            <Detail key={name}>
              <strong>{name}</strong>
              {value}
            </Detail>
          ))}
          <Detail>
            <strong>Vehicle Rating:</strong>
            <StarRow pitch={28} color="#94702a" />
          </Detail>
        </Details>
      </VehicleCard>

      <Backdrop>
        <Dialog>
          <DialogTitle>Register a new vehicle</DialogTitle>
          <Form>
            {fields.map((f) => (
              <Field key={f.label} $focused={f.focused}>
                {f.text ? (
                  <FieldStack $value={f.value}>
                    <FloatLabel $focused={f.focused}>{f.label}</FloatLabel>
                    <FieldText $value={f.value}>{f.text}</FieldText>
                  </FieldStack>
                ) : (
                  <FieldText>{f.label}</FieldText>
                )}
                {f.select && selectArrow}
                {f.value && (
                  <Stepper viewBox="0 0 24 36">
                    <rect x="0.500" y="1.500" width="23" height="33" rx="8" fill="#fff" stroke="#cfcfcf" />
                    <path d="M0.500 18H23.500" stroke="#d4d4d4" strokeWidth="2" />
                    <path d="M6.500 13L12 8L17.500 13M6.500 23L12 28L17.500 23" fill="none" stroke="#222" strokeWidth="3" />
                  </Stepper>
                )}
              </Field>
            ))}
          </Form>
          <Actions>
            <Button $plain>Cancel</Button>
            <Button>Register</Button>
          </Actions>
        </Dialog>
      </Backdrop>
    </Page>
  );
}
